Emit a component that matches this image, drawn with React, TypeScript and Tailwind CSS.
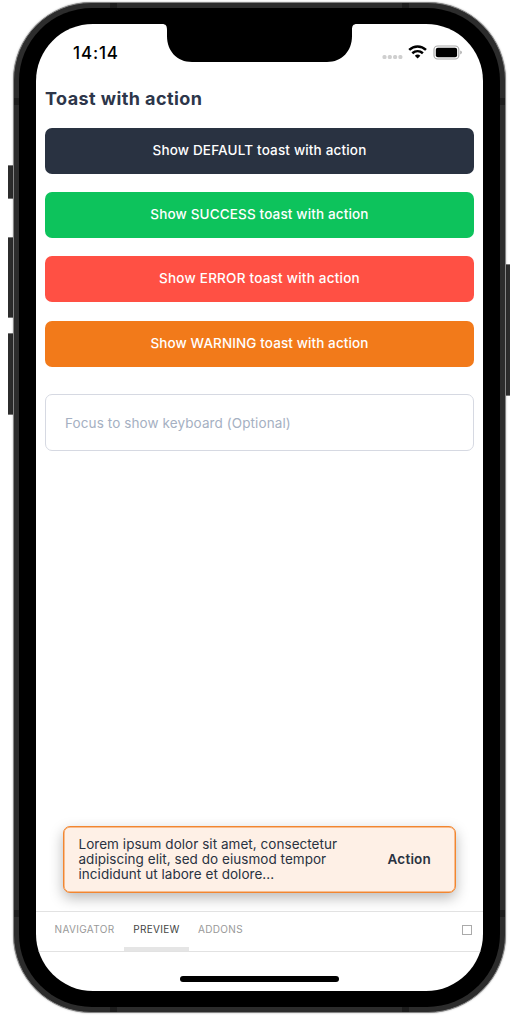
import React from 'react';

const bodyFont = 'font-[Inter,sans-serif]';

const buttons = [
  { label: 'Show DEFAULT toast with action', color: 'bg-[#293241]', spacing: 'tracking-[0.17px]' },
  { label: 'Show SUCCESS toast with action', color: 'bg-[#0dc35c]', spacing: 'tracking-[0.15px]' },
  { label: 'Show ERROR toast with action', color: 'bg-[#ff5044]', spacing: 'tracking-[0.23px]' },
  { label: 'Show WARNING toast with action', color: 'bg-[#f27a1a]', spacing: 'tracking-[0.1px]' },
];

const sideKey = 'bg-[#2c2c2c] border-y border-[#777]';

const antennaBands = [
  'left-[96px] top-0 h-[5px] w-[7px]',
  'right-[96px] top-0 h-[5px] w-[7px]',
  'left-[96px] bottom-0 h-[5px] w-[7px]',
  'right-[96px] bottom-0 h-[5px] w-[7px]',
  'left-0 top-[95px] h-[7px] w-[5px]',
  'right-0 top-[95px] h-[7px] w-[5px]',
  'left-0 bottom-[95px] h-[7px] w-[5px]',
  'right-0 bottom-[95px] h-[7px] w-[5px]',
];

function Notch() {
  return (
    <svg className="absolute left-[126px] top-0" width="196" height="39" viewBox="0 0 196 39">
      <path d="M0 0C4 0 5 2 5 6V12C5 27 15 38 30 38H165C180 38 190 27 190 12V6C190 2 191 0 195 0Z" fill="#000" />
    </svg>
  );
}

function StatusBar() {
  return (
    <header className="flex h-14 items-center pl-[37px] pr-[20px]">
      <span className="pt-px font-[Inter,sans-serif] text-[17px] font-medium leading-5 tracking-[0.85px] text-black">14:14</span>
      <svg className="ml-auto" width="82" height="20" viewBox="0 0 82 20">
        <g fill="#cfcfcf">
          <rect x="1.5" y="12.9" width="4" height="4" rx="1.5" />
          <rect x="6.8" y="12.9" width="4" height="4" rx="1.5" />
          <rect x="12.1" y="12.9" width="4" height="4" rx="1.5" />
          <rect x="17.4" y="12.9" width="4" height="4" rx="1.5" />
        </g>
        <g fill="none" stroke="#000" strokeWidth="2.5">
          <path d="M28.2 7.9C33 3.3 40.2 3.3 45 7.9" />
          <path d="M31.3 11.3C34.5 8.4 38.7 8.4 41.9 11.3" />
        </g>
        <path d="M36.6 16.6L33.8 13.7C35.4 12.2 37.8 12.2 39.4 13.7Z" fill="#000" />
        <rect x="53" y="4" width="24.8" height="13" rx="3.6" fill="none" stroke="#aaa" strokeWidth="1.2" />
        <rect x="54.8" y="5.8" width="21.3" height="9.4" rx="2" fill="#000" />
        <path d="M79.4 8.6C81.2 9.2 81.2 11.8 79.4 12.4Z" fill="#999" />
      </svg>
    </header>
  );
}

function Toast() {
  return (
    <div className={`${bodyFont} mx-[27px] mb-[18px] flex h-[67px] items-center rounded-[7px] border border-[#f28630] bg-[#fef0e6] pl-[14.5px] pr-6 text-[#293241] shadow-[inset_0_0_0_0.5px_#f28a38,0_5px_14px_rgba(0,0,0,0.28)]`}>
      <p className="flex-1 whitespace-nowrap text-[13.5px] leading-[15px] tracking-[0.04px]">
        <span className="block">Lorem ipsum dolor sit amet, consectetur</span>
        <span className="block">adipiscing elit, sed do eiusmod tempor</span>
        <span className="block">incididunt ut labore et dolore...</span>
      </p>
      <button className="pb-px text-[13.5px] font-semibold leading-4 tracking-[0.2px]">Action</button>
    </div>
  );
}

function TabBar() {
  return (
    <nav className="flex h-[41px] items-stretch border-y border-[#e2e2e2] pl-[9px] font-[Inter,sans-serif] text-[10px] leading-[35px] tracking-[0.34px] text-[#999]">
      <button className="w-[79px] border-b-4 border-transparent">NAVIGATOR</button>
      <button className="w-[65px] border-b-4 border-[#e5e5e5] text-[#444]">PREVIEW</button>
      <button className="w-[63px] border-b-4 border-transparent">ADDONS</button>
      <span className="ml-auto mr-[11px] mt-[13px] size-[10px] border border-[#aaa]" />
    </nav>
  );
}

export default function App() {
  return (
    <div className="flex h-[1017px] w-[518px] overflow-hidden bg-white">
      <div className="flex w-[13px] flex-col items-end pt-[165px]">
        <div className={`${sideKey} h-[34px] w-[5px]`} />
        <div className={`${sideKey} mt-[38px] h-[81px] w-[5px]`} />
        <div className={`${sideKey} mt-[15px] h-[82px] w-[5px]`} />
      </div>
      <div className="relative mt-[2px] h-[1011px] w-[493px] shrink-0 rounded-[78px] border border-[#858585] bg-[#2c2c2c] p-[5px] shadow-[0_0_2px_rgba(0,0,0,0.3)]">
        {antennaBands.map((band) => (
          <span key={band} className={`absolute bg-[#1d1d1d] ${band}`} />
        ))}
        <div className="h-full rounded-[73px] bg-black px-[17px] py-[16px]">
          <main className="relative flex h-[967px] w-[447px] flex-col overflow-hidden rounded-[57px] bg-white">
            <Notch />
            <StatusBar />
            <section className={`${bodyFont} px-[9px]`}>
              <h1 className="mt-[8px] whitespace-nowrap text-[18px] font-bold leading-[22px] tracking-[0.42px] text-[#2d364a]">Toast with action</h1>
              <div className="mt-[18px] flex flex-col gap-[18.2px]">
                {buttons.map((b) => (
                  <button key={b.label} className={`${b.color} ${b.spacing} h-[46px] rounded-[7px] pb-[1.6px] text-[13.5px] font-medium text-white`}>
                    {b.label}
                  </button>
                ))}
              </div>
              <input
                className="mt-[27px] block h-[57px] w-full rounded-[7px] border border-[#d6d9e2] px-[19px] pt-[2px] text-[13.5px] tracking-[0.1px] outline-none placeholder:text-[#a5b0c2]"
                placeholder="Focus to show keyboard (Optional)"
              />
            </section>
            <div className="flex-1" />
            <Toast />
            <TabBar />
            <div className="flex h-[39px] shrink-0 justify-center pt-[24px]">
              <div className="h-[6px] w-[159px] rounded-full bg-black" />
            </div>
          </main>
        </div>
      </div>
      <div className="w-[5px] pt-[264px]">
        <div className={`${sideKey} h-[132px] w-[4px]`} />
      </div>
    </div>
  );
}
